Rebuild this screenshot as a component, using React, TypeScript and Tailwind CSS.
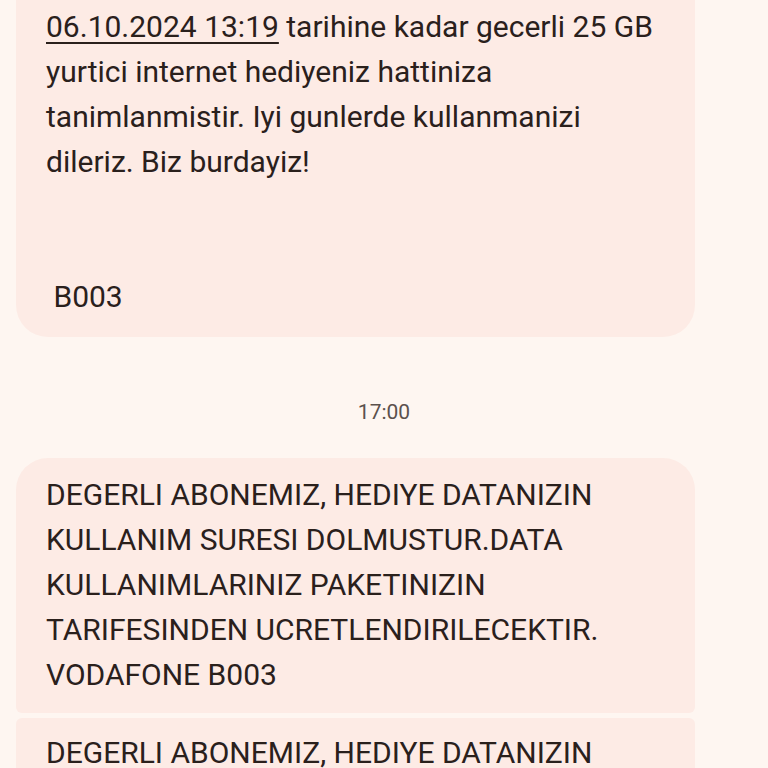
export default function App() {
  return (
    <div className="h-screen overflow-hidden bg-[#fef6f1] px-4 font-['Roboto',sans-serif] text-[30px] leading-[45px] text-[#2a201c]">
      <div className="flex w-[679px] flex-col">
        {/* first message, scrolled so its top is cut off */}
        <div className="rounded-b-[32px] bg-[#fdebe5] pb-[18px] pl-[30px] pr-[20px] pt-[4px] whitespace-pre-wrap">
          <span className="underline decoration-2 underline-offset-[5px]">06.10.2024 13:19</span> tarihine kadar gecerli 25 GB
          <br />
          yurtici internet hediyeniz hattiniza
          <br />
          tanimlanmistir. Iyi gunlerde kullanmanizi
          <br />
          dileriz. Biz burdayiz!
          <br />
          <br />
          <br />
          {' B003'}
        </div>

        <div className="mb-[31px] mt-[60px] ml-[-16px] w-[768px] text-center text-[21px] leading-[30px] text-[#5b514d]">
          17:00
        </div>

        <div className="rounded-b-[6px] rounded-t-[32px] bg-[#fdebe5] pb-[16px] pl-[30px] pr-[20px] pt-[14px]">
          DEGERLI ABONEMIZ, HEDIYE DATANIZIN
          <br />
          KULLANIM SURESI DOLMUSTUR.DATA
          <br />
          KULLANIMLARINIZ PAKETINIZIN
          <br />
          TARIFESINDEN UCRETLENDIRILECEKTIR.
          <br />
          VODAFONE B003
        </div>

        <div className="mt-[5px] rounded-t-[6px] rounded-b-[32px] bg-[#fdebe5] pb-[16px] pl-[30px] pr-[20px] pt-[12px]">
          DEGERLI ABONEMIZ, HEDIYE DATANIZIN
          <br />
          KULLANIM SURESI DOLMUSTUR.DATA
        </div>
      </div>
    </div>
  );
}
